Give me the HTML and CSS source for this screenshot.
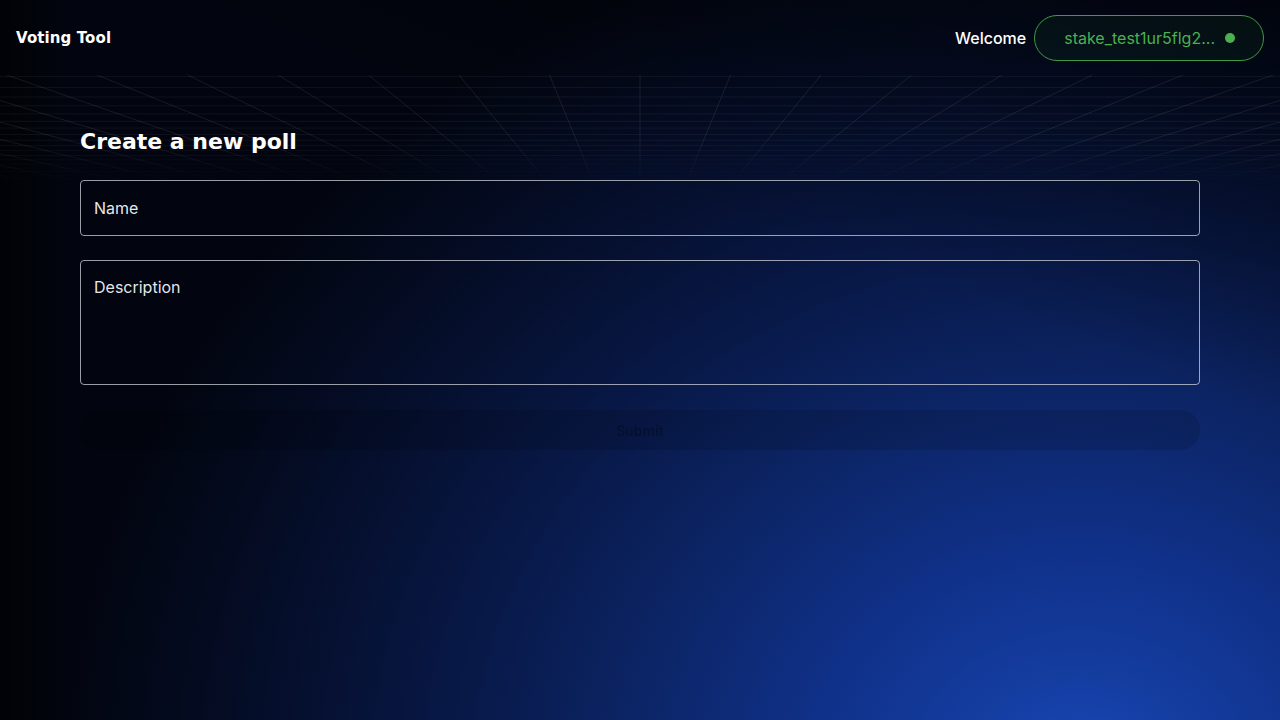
FILE: index.html
```html
<!DOCTYPE html>
<html lang="en">
<head>
<meta charset="utf-8">
<title>Voting Tool</title>
<link rel="stylesheet" href="styles.css">
</head>
<body>
<div class="page">
  <div class="grid-deco" aria-hidden="true">
    <svg class="grid-svg" width="1280" height="110" viewBox="0 0 1280 110">
      <g class="rays">
        <line x1="640" y1="0" x2="640" y2="105"/>
        <line x1="730.5" y1="0" x2="687.3" y2="105"/>
        <line x1="821" y1="0" x2="734.6" y2="105"/>
        <line x1="911.5" y1="0" x2="781.9" y2="105"/>
        <line x1="1002" y1="0" x2="829.2" y2="105"/>
        <line x1="1092.5" y1="0" x2="876.5" y2="105"/>
        <line x1="1183" y1="0" x2="923.8" y2="105"/>
        <line x1="1273.5" y1="0" x2="971.1" y2="105"/>
        <line x1="1364" y1="0" x2="1018.4" y2="105"/>
        <line x1="1454.5" y1="0" x2="1065.7" y2="105"/>
        <line x1="1545" y1="0" x2="1113" y2="105"/>
        <line x1="1635.5" y1="0" x2="1160.3" y2="105"/>
        <line x1="1726" y1="0" x2="1207.6" y2="105"/>
        <line x1="1816.5" y1="0" x2="1254.9" y2="105"/>
        <line x1="1907" y1="0" x2="1302.2" y2="105"/>
        <line x1="549.5" y1="0" x2="592.7" y2="105"/>
        <line x1="459" y1="0" x2="545.4" y2="105"/>
        <line x1="368.5" y1="0" x2="498.1" y2="105"/>
        <line x1="278" y1="0" x2="450.8" y2="105"/>
        <line x1="187.5" y1="0" x2="403.5" y2="105"/>
        <line x1="97" y1="0" x2="356.2" y2="105"/>
        <line x1="6.5" y1="0" x2="308.9" y2="105"/>
        <line x1="-84" y1="0" x2="261.6" y2="105"/>
        <line x1="-174.5" y1="0" x2="214.3" y2="105"/>
        <line x1="-265" y1="0" x2="167" y2="105"/>
        <line x1="-355.5" y1="0" x2="119.7" y2="105"/>
        <line x1="-446" y1="0" x2="72.4" y2="105"/>
        <line x1="-536.5" y1="0" x2="25.1" y2="105"/>
        <line x1="-627" y1="0" x2="-22.2" y2="105"/>
      </g>
      <g class="rungs">
        <line x1="0" y1="1.7" x2="1280" y2="1.7"/>
        <line x1="0" y1="12.4" x2="1280" y2="12.4"/>
        <line x1="0" y1="22" x2="1280" y2="22"/>
        <line x1="0" y1="30.8" x2="1280" y2="30.8"/>
        <line x1="0" y1="38.9" x2="1280" y2="38.9"/>
        <line x1="0" y1="46.3" x2="1280" y2="46.3"/>
        <line x1="0" y1="53.1" x2="1280" y2="53.1"/>
        <line x1="0" y1="59.4" x2="1280" y2="59.4"/>
        <line x1="0" y1="65.2" x2="1280" y2="65.2"/>
        <line x1="0" y1="70.7" x2="1280" y2="70.7"/>
        <line x1="0" y1="75.7" x2="1280" y2="75.7"/>
        <line x1="0" y1="80.5" x2="1280" y2="80.5"/>
        <line x1="0" y1="84.9" x2="1280" y2="84.9"/>
        <line x1="0" y1="89" x2="1280" y2="89"/>
        <line x1="0" y1="93" x2="1280" y2="93"/>
        <line x1="0" y1="96.6" x2="1280" y2="96.6"/>
        <line x1="0" y1="100.1" x2="1280" y2="100.1"/>
        <line x1="0" y1="103.4" x2="1280" y2="103.4"/>
      </g>
    </svg>
  </div>

  <header class="topbar">
    <div class="brand">Voting Tool</div>
    <div class="account">
      <span class="welcome">Welcome</span>
      <button class="wallet-pill" type="button">
        <span class="wallet-addr">stake_test1ur5flg2...</span>
        <span class="wallet-dot"></span>
      </button>
    </div>
  </header>

  <main class="content">
    <h1 class="page-title">Create a new poll</h1>
    <form class="poll-form">
      <input class="field field-name" type="text" placeholder="Name">
      <textarea class="field field-desc" placeholder="Description"></textarea>
      <button class="submit-btn" type="button" disabled>Submit</button>
    </form>
  </main>
</div>
</body>
</html>
```

FILE: styles.css
```css
* {
  box-sizing: border-box;
}

html, body {
  margin: 0;
  padding: 0;
  height: 100%;
}

body {
  font-family: Inter, "Noto Sans", sans-serif;
  color: #ffffff;
  background-color: #02040b;
  background-image:
    radial-gradient(ellipse 1020px 880px at 1080px 780px,
      #1949bb 0%,
      #143da0 12%,
      #10318a 26%,
      #0c2566 44%,
      #081846 62%,
      #050e2a 80%,
      #02050f 100%);
  overflow: hidden;
}

.page {
  position: relative;
  width: 1280px;
  height: 720px;
  background-image:
    linear-gradient(to right, rgba(0, 0, 0, 0.6) 0px, rgba(0, 0, 0, 0) 70px),
    linear-gradient(200deg, rgba(0, 0, 0, 0.55) 0%, rgba(0, 0, 0, 0) 35%);
}

.grid-deco {
  position: absolute;
  left: 0;
  top: 75px;
  width: 1280px;
  height: 110px;
  pointer-events: none;
  -webkit-mask-image: linear-gradient(to bottom, #000 0%, #000 55%, rgba(0,0,0,0) 100%);
  mask-image: linear-gradient(to bottom, #000 0%, #000 55%, rgba(0,0,0,0) 100%);
}

.grid-svg {
  display: block;
}

.rays line {
  stroke: rgba(255, 255, 255, 0.085);
  stroke-width: 1;
}

.rungs line {
  stroke: rgba(255, 255, 255, 0.06);
  stroke-width: 1;
}

.topbar {
  position: relative;
  height: 75px;
  display: flex;
  align-items: center;
  justify-content: space-between;
  padding: 0 16px;
}

.brand {
  font-family: "DejaVu Sans", sans-serif;
  font-weight: 700;
  font-size: 15px;
  letter-spacing: 0.1px;
  color: #ffffff;
  margin-top: 1px;
}

.account {
  display: flex;
  align-items: center;
  gap: 8px;
}

.welcome {
  font-size: 16px;
  font-weight: 500;
  color: #ffffff;
  margin-left: 1px;
}

.wallet-pill {
  display: flex;
  align-items: center;
  gap: 10px;
  height: 46px;
  padding: 0 28px 0 29px;
  border: 1px solid #3f9a44;
  border-radius: 23px;
  background: rgba(30, 110, 40, 0.1);
  font-family: Inter, "Noto Sans", sans-serif;
  font-size: 16px;
  color: #4caf50;
  cursor: pointer;
}

.wallet-dot {
  width: 10px;
  height: 10px;
  border-radius: 50%;
  background: #4caf50;
}

.content {
  position: relative;
  padding: 51px 80px 0;
}

.page-title {
  margin: 0 0 22px;
  font-family: "DejaVu Sans", sans-serif;
  font-weight: 700;
  font-size: 22px;
  line-height: 32px;
  color: #ffffff;
}

.poll-form {
  display: flex;
  flex-direction: column;
  gap: 24px;
}

.field {
  width: 100%;
  border: 1px solid rgba(220, 222, 228, 0.7);
  border-radius: 4px;
  background: transparent;
  color: #ffffff;
  font-family: Inter, "Noto Sans", sans-serif;
  font-size: 16px;
  padding: 0 13px 1px;
  outline: none;
}

.field::placeholder {
  color: rgba(255, 255, 255, 0.92);
  opacity: 1;
}

.field-name {
  height: 56px;
}

.field-desc {
  height: 125px;
  padding-top: 15px;
  line-height: 22px;
  resize: none;
}

.submit-btn {
  height: 40px;
  margin-top: 1px;
  border: none;
  border-radius: 20px;
  background: rgba(0, 0, 0, 0.12);
  color: rgba(0, 0, 0, 0.28);
  font-family: Inter, "Noto Sans", sans-serif;
  font-size: 14px;
  font-weight: 600;
}
```
